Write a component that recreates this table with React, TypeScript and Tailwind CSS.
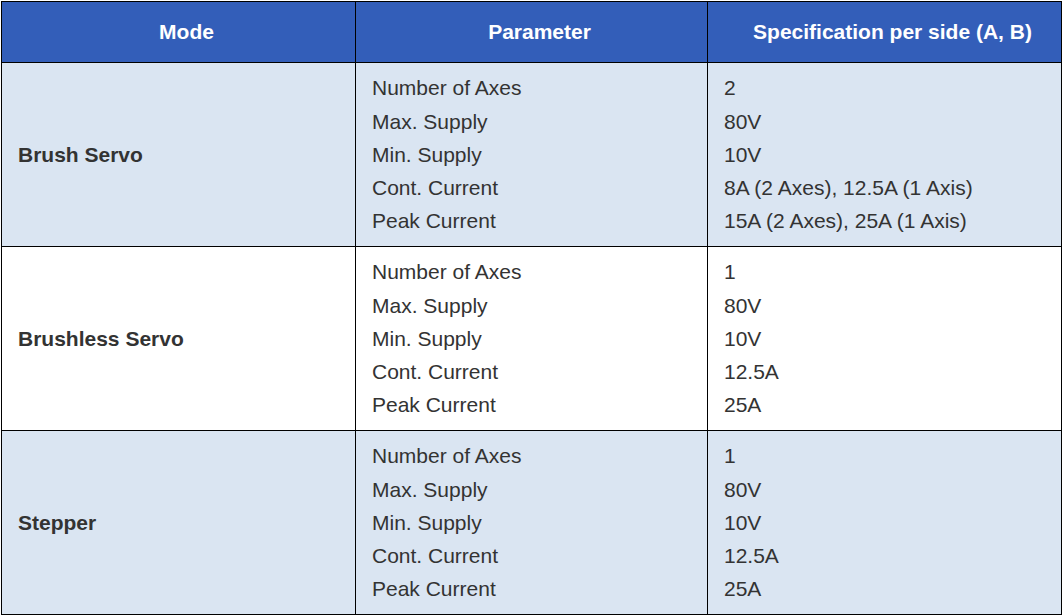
import React from 'react';

type Row = {
  mode: string;
  shaded: boolean;
  specs: [string, string][];
};

const rows: Row[] = [
  {
    mode: 'Brush Servo',
    shaded: true,
    specs: [
      ['Number of Axes', '2'],
      ['Max. Supply', '80V'],
      ['Min. Supply', '10V'],
      ['Cont. Current', '8A (2 Axes), 12.5A (1 Axis)'],
      ['Peak Current', '15A (2 Axes), 25A (1 Axis)'],
    ],
  },
  {
    mode: 'Brushless Servo',
    shaded: false,
    specs: [
      ['Number of Axes', '1'],
      ['Max. Supply', '80V'],
      ['Min. Supply', '10V'],
      ['Cont. Current', '12.5A'],
      ['Peak Current', '25A'],
    ],
  },
  {
    mode: 'Stepper',
    shaded: true,
    specs: [
      ['Number of Axes', '1'],
      ['Max. Supply', '80V'],
      ['Min. Supply', '10V'],
      ['Cont. Current', '12.5A'],
      ['Peak Current', '25A'],
    ],
  },
];

const App: React.FC = () => {
  return (
    <div className="w-[1063px] h-[616px] bg-white pt-[1px] pl-[1px] font-['Liberation_Sans',Arial,sans-serif]">
      <table className="w-[1060px] border-collapse table-fixed text-[21px] leading-[33.3px]">
        <colgroup>
          <col className="w-[354px]" />
          <col className="w-[352px]" />
          <col className="w-[354px]" />
        </colgroup>
        <thead>
          <tr className="h-[61px] bg-[#335eb9] text-white font-bold">
            <th className="border border-black pl-4 text-center">Mode</th>
            <th className="border border-black pl-4 text-center">Parameter</th>
            <th className="border border-black pl-4 text-center">Specification per side (A, B)</th>
          </tr>
        </thead>
        <tbody className="text-[#333333]">
          {rows.map((row) => (
            <tr key={row.mode} className={`h-[184px] ${row.shaded ? 'bg-[#dae5f2]' : 'bg-white'}`}>
              {/* Mode name */}
              <td className="border border-black pl-4 align-middle font-bold">{row.mode}</td>
              {/* Parameter names */}
              <td className="border border-black pl-4 align-middle">
                {row.specs.map(([name]) => (
                  <div key={name}>{name}</div>
                ))}
              </td>
              {/* Values */}
              <td className="border border-black pl-4 align-middle">
                {row.specs.map(([name, value]) => (
                  <div key={name}>{value}</div>
                ))}
              </td>
            </tr>
          ))}
        </tbody>
      </table>
    </div>
  );
};

export default App;
